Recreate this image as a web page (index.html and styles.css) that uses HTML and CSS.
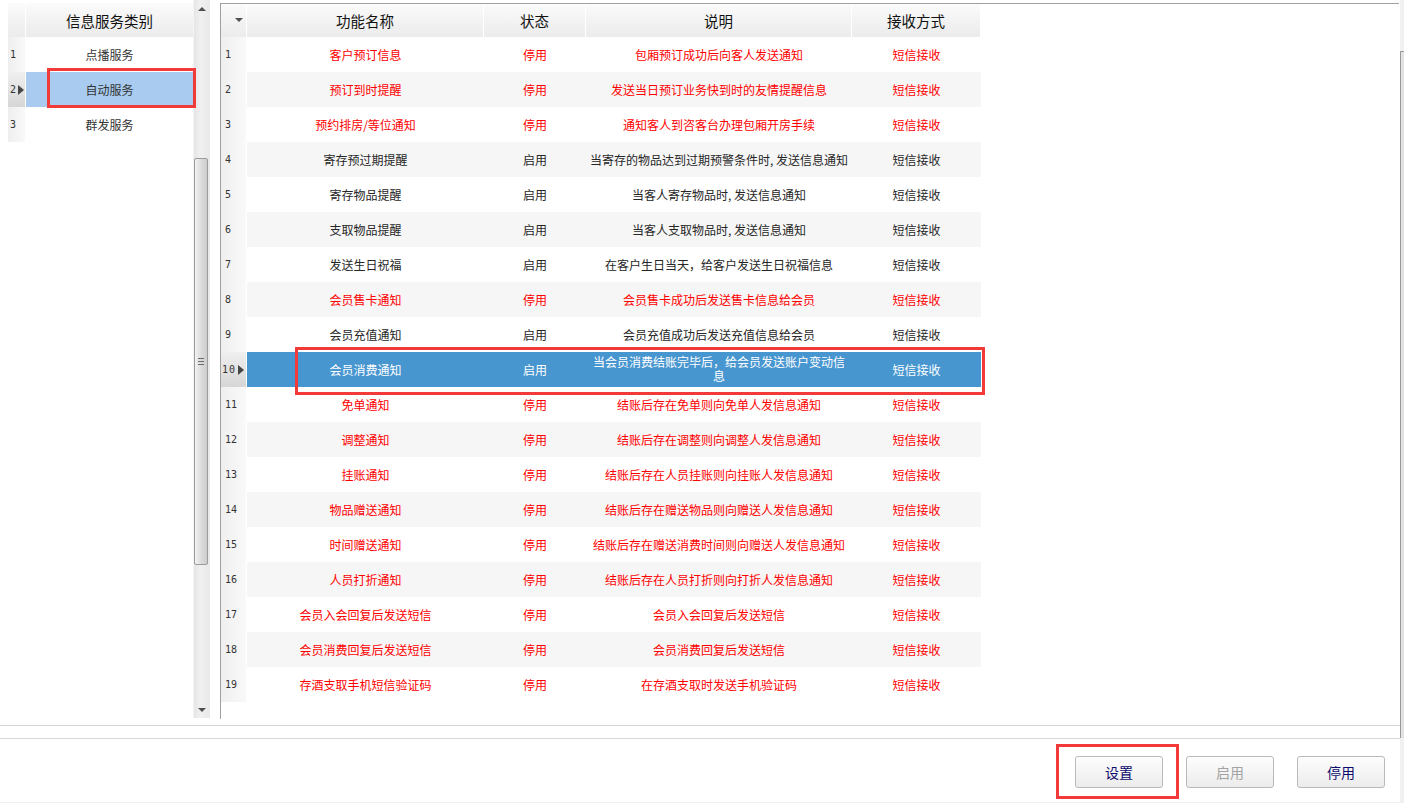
FILE: index.html
```html
<!DOCTYPE html>
<html lang="zh-CN">
<head>
<meta charset="utf-8">
<title>信息服务</title>
<link rel="stylesheet" href="styles.css">
</head>
<body>
<div class="page">
  <div class="main">
    <div class="workspace">
      <div class="left">
        <div class="lgrid">
          <div class="lhead">
            <div class="lnum lnum-head"></div>
            <div class="lcell lcell-head">信息服务类别</div>
          </div>
          <div class="lrow">
            <div class="lnum">1</div>
            <div class="lcell">点播服务</div>
          </div>
          <div class="lrow lrow-sel">
            <div class="lnum lnum-sel">2<span class="caret"></span></div>
            <div class="lcell">自动服务</div>
            <div class="mark mark-left"></div>
          </div>
          <div class="lrow">
            <div class="lnum">3</div>
            <div class="lcell">群发服务</div>
          </div>
        </div>
        <div class="vscroll">
          <div class="sb-btn"><span class="arrow-up"></span></div>
          <div class="sb-track">
            <div class="sb-thumb"><span class="grip"></span></div>
          </div>
          <div class="sb-btn sb-btn-down"><span class="arrow-down"></span></div>
        </div>
      </div>

      <div class="right">
        <div class="grid">
          <div class="row head">
            <div class="rnum rnum-head"><span class="sort-arrow"></span></div>
            <div class="cell c1">功能名称</div>
            <div class="cell c2">状态</div>
            <div class="cell c3">说明</div>
            <div class="cell c4">接收方式</div>
          </div>
          <div class="row off">
            <div class="rnum">1</div>
            <div class="cell c1">客户预订信息</div><div class="cell c2">停用</div>
            <div class="cell c3">包厢预订成功后向客人发送通知</div><div class="cell c4">短信接收</div>
          </div>
          <div class="row off alt">
            <div class="rnum">2</div>
            <div class="cell c1">预订到时提醒</div><div class="cell c2">停用</div>
            <div class="cell c3">发送当日预订业务快到时的友情提醒信息</div><div class="cell c4">短信接收</div>
          </div>
          <div class="row off">
            <div class="rnum">3</div>
            <div class="cell c1">预约排房/等位通知</div><div class="cell c2">停用</div>
            <div class="cell c3">通知客人到咨客台办理包厢开房手续</div><div class="cell c4">短信接收</div>
          </div>
          <div class="row on alt">
            <div class="rnum">4</div>
            <div class="cell c1">寄存预过期提醒</div><div class="cell c2">启用</div>
            <div class="cell c3">当寄存的物品达到过期预警条件时, 发送信息通知</div><div class="cell c4">短信接收</div>
          </div>
          <div class="row on">
            <div class="rnum">5</div>
            <div class="cell c1">寄存物品提醒</div><div class="cell c2">启用</div>
            <div class="cell c3">当客人寄存物品时, 发送信息通知</div><div class="cell c4">短信接收</div>
          </div>
          <div class="row on alt">
            <div class="rnum">6</div>
            <div class="cell c1">支取物品提醒</div><div class="cell c2">启用</div>
            <div class="cell c3">当客人支取物品时, 发送信息通知</div><div class="cell c4">短信接收</div>
          </div>
          <div class="row on">
            <div class="rnum">7</div>
            <div class="cell c1">发送生日祝福</div><div class="cell c2">启用</div>
            <div class="cell c3">在客户生日当天，给客户发送生日祝福信息</div><div class="cell c4">短信接收</div>
          </div>
          <div class="row off alt">
            <div class="rnum">8</div>
            <div class="cell c1">会员售卡通知</div><div class="cell c2">停用</div>
            <div class="cell c3">会员售卡成功后发送售卡信息给会员</div><div class="cell c4">短信接收</div>
          </div>
          <div class="row on">
            <div class="rnum">9</div>
            <div class="cell c1">会员充值通知</div><div class="cell c2">启用</div>
            <div class="cell c3">会员充值成功后发送充值信息给会员</div><div class="cell c4">短信接收</div>
          </div>
          <div class="row sel">
            <div class="rnum rnum-sel">10<span class="caret"></span></div>
            <div class="cell c1">会员消费通知</div><div class="cell c2">启用</div>
            <div class="cell c3 wrap">当会员消费结账完毕后，给会员发送账户变动信<br>息</div><div class="cell c4">短信接收</div>
            <div class="mark mark-row"></div>
          </div>
          <div class="row off">
            <div class="rnum">11</div>
            <div class="cell c1">免单通知</div><div class="cell c2">停用</div>
            <div class="cell c3">结账后存在免单则向免单人发信息通知</div><div class="cell c4">短信接收</div>
          </div>
          <div class="row off alt">
            <div class="rnum">12</div>
            <div class="cell c1">调整通知</div><div class="cell c2">停用</div>
            <div class="cell c3">结账后存在调整则向调整人发信息通知</div><div class="cell c4">短信接收</div>
          </div>
          <div class="row off">
            <div class="rnum">13</div>
            <div class="cell c1">挂账通知</div><div class="cell c2">停用</div>
            <div class="cell c3">结账后存在人员挂账则向挂账人发信息通知</div><div class="cell c4">短信接收</div>
          </div>
          <div class="row off alt">
            <div class="rnum">14</div>
            <div class="cell c1">物品赠送通知</div><div class="cell c2">停用</div>
            <div class="cell c3">结账后存在赠送物品则向赠送人发信息通知</div><div class="cell c4">短信接收</div>
          </div>
          <div class="row off">
            <div class="rnum">15</div>
            <div class="cell c1">时间赠送通知</div><div class="cell c2">停用</div>
            <div class="cell c3">结账后存在赠送消费时间则向赠送人发信息通知</div><div class="cell c4">短信接收</div>
          </div>
          <div class="row off alt">
            <div class="rnum">16</div>
            <div class="cell c1">人员打折通知</div><div class="cell c2">停用</div>
            <div class="cell c3">结账后存在人员打折则向打折人发信息通知</div><div class="cell c4">短信接收</div>
          </div>
          <div class="row off">
            <div class="rnum">17</div>
            <div class="cell c1">会员入会回复后发送短信</div><div class="cell c2">停用</div>
            <div class="cell c3">会员入会回复后发送短信</div><div class="cell c4">短信接收</div>
          </div>
          <div class="row off alt">
            <div class="rnum">18</div>
            <div class="cell c1">会员消费回复后发送短信</div><div class="cell c2">停用</div>
            <div class="cell c3">会员消费回复后发送短信</div><div class="cell c4">短信接收</div>
          </div>
          <div class="row off">
            <div class="rnum">19</div>
            <div class="cell c1">存酒支取手机短信验证码</div><div class="cell c2">停用</div>
            <div class="cell c3">在存酒支取时发送手机验证码</div><div class="cell c4">短信接收</div>
          </div>
        </div>
      </div>
    </div>
    <div class="spacer"></div>
    <div class="toolbar">
      <div class="btn-wrap">
        <button class="btn">设置</button>
        <div class="mark mark-btn"></div>
      </div>
      <div class="btn-wrap">
        <button class="btn btn-disabled">启用</button>
      </div>
      <div class="btn-wrap">
        <button class="btn">停用</button>
      </div>
    </div>
  </div>
  <div class="edge"><div class="edge-thumb"></div></div>
</div>
</body>
</html>
```

FILE: styles.css
```css
html, body {
  margin: 0;
  padding: 0;
  background: #ffffff;
  overflow: hidden;
}

body {
  font-family: "Noto Sans CJK SC", "Noto Sans", sans-serif;
  font-size: 12px;
  color: #222222;
}

.page {
  display: flex;
  width: 1404px;
  height: 803px;
}

.main {
  width: 1400px;
  display: flex;
  flex-direction: column;
}

/* ---------- workspace ---------- */
.workspace {
  height: 726px;
  box-sizing: border-box;
  border-bottom: 1px solid #d4d4d4;
  padding: 0 1px 7px 8px;
  display: flex;
}

.left {
  display: flex;
  width: 202px;
  margin-right: 10px;
}

.lgrid {
  width: 185px;
  padding-top: 3px;
}

.lhead,
.lrow {
  display: flex;
  height: 35px;
}

.lhead {
  height: 34px;
}

.lrow {
  position: relative;
}

.lnum {
  width: 18px;
  box-sizing: border-box;
  border-right: 1px solid #ffffff;
  background: linear-gradient(to right, #eeeeee, #f9f9f9);
  display: flex;
  align-items: center;
  padding-left: 2px;
  font-family: "DejaVu Sans Mono", monospace;
  font-size: 10px;
  color: #333333;
}

.lnum-head {
  background: linear-gradient(#fbfbfb, #ebebeb);
}

.lnum-sel {
  background: linear-gradient(#efefef, #d6d6d6);
}

.lcell {
  flex: 1;
  display: flex;
  align-items: center;
  justify-content: center;
  font-size: 12px;
  color: #333333;
  padding-bottom: 1px;
}

.lcell-head {
  background: linear-gradient(#fbfbfb, #ebebeb);
  font-size: 14.5px;
  color: #111111;
  padding-bottom: 0;
}

.lrow-sel .lcell {
  background: #a8cbef;
}

.caret {
  display: inline-block;
  width: 0;
  height: 0;
  border-left: 6px solid #454545;
  border-top: 5px solid transparent;
  border-bottom: 5px solid transparent;
  margin-left: 2px;
}

/* ---------- scrollbar ---------- */
.vscroll {
  width: 17px;
  height: 718px;
  display: flex;
  flex-direction: column;
  background: linear-gradient(to right, #e6e6e6, #f0f0f0 40%, #e9e9e9);
  border-left: 1px solid #f4f4f4;
  box-sizing: border-box;
}

.sb-btn {
  height: 17px;
  display: flex;
  justify-content: center;
  align-items: center;
}

.arrow-up {
  width: 0;
  height: 0;
  border-bottom: 4px solid #505050;
  border-left: 4px solid transparent;
  border-right: 4px solid transparent;
}

.arrow-down {
  width: 0;
  height: 0;
  border-top: 4px solid #505050;
  border-left: 4px solid transparent;
  border-right: 4px solid transparent;
}

.sb-track {
  flex: 1;
  padding-top: 141px;
}

.sb-thumb {
  width: 14px;
  height: 407px;
  box-sizing: border-box;
  border: 1px solid #9c9c9c;
  border-radius: 2px;
  background: linear-gradient(to right, #f2f2f2, #dcdcdc 50%, #cdcdcd);
  display: flex;
  align-items: center;
  justify-content: center;
}

.grip {
  width: 6px;
  height: 7px;
  background: repeating-linear-gradient(#6a6a6a 0, #6a6a6a 1px, transparent 1px, transparent 3px);
}

/* ---------- right grid ---------- */
.right {
  flex: 1;
  margin-top: 3px;
  height: 715px;
  border-left: 1px solid #a0a0a0;
  border-top: 1px solid #a0a0a0;
}

.grid {
  width: 760px;
}

.row {
  display: flex;
  height: 35px;
  position: relative;
}

.row.head {
  height: 33px;
}

.rnum {
  width: 21px;
  border-right: 1px solid #ffffff;
  background: linear-gradient(to right, #efefef, #f9f9f9);
  display: flex;
  align-items: center;
  padding-left: 4px;
  font-family: "DejaVu Sans Mono", monospace;
  font-size: 10px;
  color: #333333;
}

.rnum-head {
  background: linear-gradient(#fbfbfb, #ebebeb);
  justify-content: flex-end;
  padding-right: 3px;
  width: 18px;
}

.sort-arrow {
  width: 0;
  height: 0;
  border-top: 4px solid #505050;
  border-left: 4px solid transparent;
  border-right: 4px solid transparent;
  margin-bottom: 2px;
}

.rnum-sel {
  background: linear-gradient(#efefef, #d6d6d6);
  padding-left: 1px;
  width: 24px;
  letter-spacing: 1px;
}

.cell {
  display: flex;
  align-items: center;
  justify-content: center;
  text-align: center;
  white-space: nowrap;
  box-sizing: border-box;
}

.c1 { width: 237px; }
.c2 { width: 102px; }
.c3 { width: 266px; }
.c4 { width: 129px; }

.head .cell {
  background: linear-gradient(#fbfbfb, #ebebeb);
  border-right: 1px solid #ffffff;
  font-size: 14.5px;
  color: #111111;
}

.row.alt .cell {
  background: #f6f6f6;
}

.row.off .cell {
  color: #ff0000;
}

.row.on .cell {
  color: #262626;
}

.row.sel .cell {
  background: #4896d0;
  color: #ffffff;
}

.cell.wrap {
  white-space: normal;
  line-height: 14px;
  padding-bottom: 1px;
}

/* ---------- annotation boxes ---------- */
.mark {
  position: absolute;
  border: 3px solid #f23a3a;
  pointer-events: none;
}

.mark-left {
  left: 39px;
  top: -4px;
  right: -3px;
  bottom: -1px;
}

.mark-row {
  left: 74px;
  right: -4px;
  top: -5px;
  bottom: -8px;
}

.mark-btn {
  left: -19px;
  right: -16px;
  top: -12px;
  bottom: -11px;
}

/* ---------- toolbar ---------- */
.spacer {
  height: 12px;
}

.toolbar {
  flex: 1;
  border-top: 1px solid #d6d6d6;
  border-bottom: 1px solid #f0f0f0;
  display: flex;
  justify-content: flex-end;
  align-items: flex-start;
  padding: 17px 15px 0 0;
  gap: 23px;
}

.btn-wrap {
  position: relative;
}

.btn {
  width: 88px;
  height: 32px;
  box-sizing: border-box;
  border: 1px solid #b9b9b9;
  border-radius: 3px;
  background: linear-gradient(#fdfdfd, #ececec);
  font-family: "Noto Sans CJK SC", sans-serif;
  font-size: 14px;
  color: #0b0b6e;
  padding: 0;
}

.btn-disabled {
  color: #a3a3a3;
}

/* ---------- window edge ---------- */
.edge {
  width: 4px;
  background: #f1f1f1;
  display: flex;
  flex-direction: column;
}

.edge-thumb {
  margin-top: 51px;
  height: 686px;
  border-left: 1px solid #9a9a9a;
  border-top: 1px solid #9a9a9a;
  background: #e2e2e2;
}
```
